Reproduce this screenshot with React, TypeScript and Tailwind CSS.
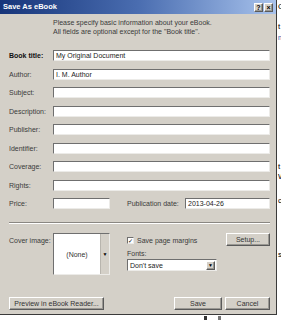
import React from "react";

const sunken =
  "bg-white border-t border-l border-t-[#6f6f6f] border-l-[#6f6f6f] border-b border-r border-b-[#ecebe8] border-r-[#ecebe8]";
const raised =
  "bg-[#d4d0c8] border border-t-[#ffffff] border-l-[#ffffff] border-b-[#5a5a5a] border-r-[#5a5a5a] shadow-[inset_-1px_-1px_0_#9a9893]";

function Row({ label, value, bold }: { label: string; value?: string; bold?: boolean }) {
  return (
    <div className="flex items-center h-[11px]">
      <div className={`w-[44px] shrink-0 ${bold ? "font-bold text-[#111]" : "text-[#3a3a3a]"}`}>{label}</div>
      <div className={`flex-1 h-[11px] ${sunken} flex items-center pl-[2px] text-[#222] leading-none`}>{value}</div>
    </div>
  );
}

export default function App() {
  return (
    <div className="relative w-[281px] h-[320px] bg-white overflow-hidden font-['Liberation_Sans',Arial,sans-serif] text-[7px] leading-[9px]">
      <div className="w-[277px] h-[315px] bg-[#d4d0c8] border-r border-b border-r-[#3a3a3a] border-b-[#3a3a3a] flex flex-col">
        {/* title bar */}
        <div className="h-[14px] shrink-0 flex items-center bg-gradient-to-r from-[#17357a] via-[#4a6db0] to-[#a9c3ec] pl-[3px] pr-[3px]">
          <div className="text-white font-bold text-[7.5px] leading-none">Save As eBook</div>
          <div className="ml-auto flex gap-[1px]">
            <div className={`w-[9px] h-[9px] ${raised} flex items-center justify-center text-[7px] font-bold leading-none text-black`}>?</div>
            <div className={`w-[9px] h-[9px] ${raised} flex items-center justify-center text-[7px] font-bold leading-none text-black`}>×</div>
          </div>
        </div>

        <div className="flex flex-col flex-1 pl-[9px] pr-[6px]">
          <div className="mt-[4px] ml-[44px] text-[#3a3a3a]">
            <div>Please specify basic information about your eBook.</div>
            <div>All fields are optional except for the "Book title".</div>
          </div>

          <div className="mt-[14px] flex flex-col gap-[7.5px]">
            <Row label="Book title:" value="My Original Document" bold />
            <Row label="Author:" value="I. M. Author" />
            <Row label="Subject:" />
            <Row label="Description:" />
            <Row label="Publisher:" />
            <Row label="Identifier:" />
            <Row label="Coverage:" />
            <Row label="Rights:" />
            <div className="flex items-center h-[11px]">
              <div className="w-[44px] shrink-0 text-[#3a3a3a]">Price:</div>
              <div className={`w-[57px] h-[11px] ${sunken}`} />
              <div className="ml-[17px] w-[58px] text-[#3a3a3a]">Publication date:</div>
              <div className={`flex-1 h-[11px] ${sunken} flex items-center pl-[2px] text-[#222] leading-none`}>2013-04-26</div>
            </div>
          </div>

          <div className="mt-[13px] h-[2px] border-t border-t-[#8a8782] border-b border-b-white" />

          <div className="mt-[9px] flex">
            <div className="w-[44px] shrink-0 text-[#3a3a3a] mt-[3px]">Cover image:</div>
            <div className={`w-[57px] h-[42px] ${sunken} flex`}>
              <div className="flex-1 flex items-center justify-center text-[#333]">(None)</div>
              <div className="w-[9px] bg-[#d4d0c8] border-l border-l-[#b8b5ae] flex items-center justify-center text-[5px] text-black">▼</div>
            </div>
            <div className="ml-[17px] flex-1 flex flex-col">
              <div className="flex items-start">
                <div className="flex items-center mt-[3px]">
                  <div className={`w-[7px] h-[7px] ${sunken} flex items-center justify-center text-[6px] leading-none text-black`}>✓</div>
                  <div className="ml-[3px] text-[#3a3a3a]">Save page margins</div>
                </div>
                <div className={`ml-auto w-[44px] h-[13px] ${raised} flex items-center justify-center text-[#333] leading-none`}>Setup...</div>
              </div>
              <div className="mt-[3px] text-[#3a3a3a]">Fonts:</div>
              <div className={`mt-[1px] w-[90px] h-[12px] ${sunken} flex items-center`}>
                <div className="flex-1 pl-[2px] text-[#222] leading-none">Don't save</div>
                <div className={`w-[9px] h-[9px] mr-[1px] ${raised} flex items-center justify-center text-[5px] text-black leading-none`}>▼</div>
              </div>
            </div>
          </div>

          <div className="mt-auto mb-[4px] flex items-center">
            <div className={`w-[95px] h-[13px] ${raised} flex items-center justify-center text-[#333] leading-none`}>Preview in eBook Reader...</div>
            <div className={`ml-auto w-[48px] h-[13px] ${raised} flex items-center justify-center text-[#333] leading-none`}>Save</div>
            <div className={`ml-[3px] w-[45px] h-[13px] ${raised} flex items-center justify-center text-[#333] leading-none`}>Cancel</div>
          </div>
        </div>
      </div>

      {/* background page fragments */}
      <div className="absolute left-[278px] top-[2px] text-[8px] text-black">C</div>
      <div className="absolute left-[278px] top-[22px] text-[8px] text-black">t</div>
      <div className="absolute left-[278px] top-[33px] text-[7px] text-[#2a4fb0]">n</div>
      <div className="absolute left-[278px] top-[162px] text-[8px] text-black">t</div>
      <div className="absolute left-[278px] top-[172px] text-[8px] text-black">W</div>
      <div className="absolute left-[278px] top-[196px] text-[8px] text-black">c</div>
      <div className="absolute left-[278px] top-[250px] text-[8px] text-black">s</div>
      <div className="absolute left-[204px] top-[316px] w-[3px] h-[4px] bg-[#333]" />
      <div className="absolute left-[218px] top-[316px] w-[3px] h-[4px] bg-[#777]" />
    </div>
  );
}
